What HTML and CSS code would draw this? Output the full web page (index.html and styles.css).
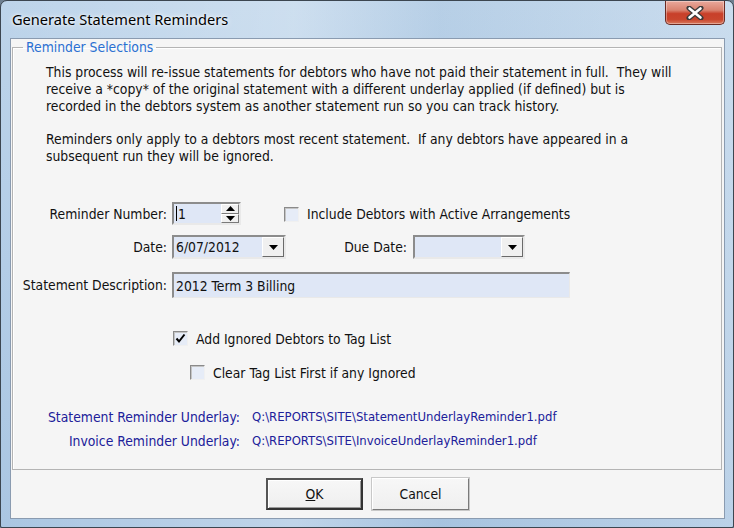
FILE: index.html
```html
<!DOCTYPE html>
<html>
<head>
<meta charset="utf-8">
<link rel="stylesheet" href="styles.css">
</head>
<body>
<div class="window">
  <div class="titlebar">
    <span class="title">Generate Statement Reminders</span>
    <div class="close">
      <svg width="20" height="14" viewBox="0 0 20 14">
        <path d="M4 2 L16 12 M16 2 L4 12" stroke="#3a3a3a" stroke-width="5" stroke-linecap="round"/>
        <path d="M4.5 2.5 L15.5 11.5 M15.5 2.5 L4.5 11.5" stroke="#ffffff" stroke-width="2.6" stroke-linecap="round"/>
      </svg>
    </div>
  </div>
  <div class="client">
    <fieldset class="group">
      <legend class="legend">Reminder Selections</legend>
      <p class="para">This process will re-issue statements for debtors who have not paid their statement in full.&nbsp; They will<br>receive a *copy* of the original statement with a different underlay applied (if defined) but is<br>recorded in the debtors system as another statement run so you can track history.</p>
      <p class="para para2">Reminders only apply to a debtors most recent statement.&nbsp; If any debtors have appeared in a<br>subsequent run they will be ignored.</p>

      <div class="row row1">
        <span class="label">Reminder Number:</span>
        <div class="field spin">
          <span class="val"><span class="caret"></span>1</span>
          <div class="spinbtns">
            <div class="sbtn"><svg width="9" height="5" viewBox="0 0 9 5"><path d="M0 5 L4.5 0 L9 5Z" fill="#000"/></svg></div>
            <div class="sbtn"><svg width="9" height="5" viewBox="0 0 9 5"><path d="M0 0 L4.5 5 L9 0Z" fill="#000"/></svg></div>
          </div>
        </div>
        <span class="check chk-arr"></span>
        <span class="ctext">Include Debtors with Active Arrangements</span>
      </div>

      <div class="row row2">
        <span class="label">Date:</span>
        <div class="field combo date">
          <span class="val">6/07/2012</span>
          <div class="dbtn"><svg width="9" height="5" viewBox="0 0 9 5"><path d="M0 0 L4.5 5 L9 0Z" fill="#000"/></svg></div>
        </div>
        <span class="label label-due">Due Date:</span>
        <div class="field combo due">
          <span class="val"></span>
          <div class="dbtn"><svg width="9" height="5" viewBox="0 0 9 5"><path d="M0 0 L4.5 5 L9 0Z" fill="#000"/></svg></div>
        </div>
      </div>

      <div class="row row3">
        <span class="label">Statement Description:</span>
        <div class="field text desc"><span class="val">2012 Term 3 Billing</span></div>
      </div>

      <div class="row row4">
        <span class="check checked">
          <svg width="11" height="11" viewBox="0 0 11 11"><path d="M1.5 5.5 L4 8.5 L9.5 1.5" stroke="#000" stroke-width="2" fill="none"/></svg>
        </span>
        <span class="ctext">Add Ignored Debtors to Tag List</span>
      </div>

      <div class="row row5">
        <span class="check"></span>
        <span class="ctext">Clear Tag List First if any Ignored</span>
      </div>

      <div class="row row6 blue">
        <span class="ulabel">Statement Reminder Underlay:</span>
        <span class="upath">Q:\REPORTS\SITE\StatementUnderlayReminder1.pdf</span>
      </div>
      <div class="row row7 blue">
        <span class="ulabel">Invoice Reminder Underlay:</span>
        <span class="upath">Q:\REPORTS\SITE\InvoiceUnderlayReminder1.pdf</span>
      </div>
    </fieldset>
    <div class="footer">
      <button class="btn default"><span class="u">O</span>K</button>
      <button class="btn">Cancel</button>
    </div>
  </div>
</div>
</body>
</html>
```
FILE: styles.css
```css
html, body {
  margin: 0;
  padding: 0;
}
body {
  width: 734px;
  height: 528px;
  overflow: hidden;
  background: #6e7f90;
}
.window {
  width: 734px;
  height: 528px;
  box-sizing: border-box;
  border: 1px solid #3c4650;
  border-radius: 7px 7px 2px 2px;
  background:
    linear-gradient(90deg, rgba(255,255,255,0.0) 0%, rgba(255,255,255,0.25) 40%, rgba(150,180,210,0.15) 60%, rgba(255,255,255,0.2) 100%),
    linear-gradient(180deg, #bdd4ea 0%, #b3cde6 50%, #aac6e2 100%);
  display: flex;
  flex-direction: column;
  font-family: "DejaVu Sans Condensed", "DejaVu Sans", sans-serif;
  font-stretch: condensed;
  font-size: 13.8px;
  color: #111;
}
.titlebar {
  height: 37px;
  display: flex;
  align-items: flex-start;
  justify-content: space-between;
  padding-left: 11px;
  padding-right: 8px;
}
.title {
  font-family: "Noto Sans", "DejaVu Sans", sans-serif;
  font-stretch: normal;
  font-size: 14.6px;
  line-height: 20px;
  margin-top: 8px;
  color: #000;
  text-shadow: 0 0 6px rgba(255,255,255,0.9), 0 0 3px rgba(255,255,255,0.9);
}
.close {
  width: 60px;
  height: 24px;
  box-sizing: border-box;
  border: 1px solid #6b2a22;
  border-top: none;
  border-radius: 0 0 5px 5px;
  background: linear-gradient(180deg, #e9a99c 0%, #d9826f 40%, #c8402a 55%, #c9452d 80%, #d97a5e 100%);
  display: flex;
  align-items: center;
  justify-content: center;
  box-shadow: inset 0 0 0 1px rgba(255,255,255,0.35);
}
.client {
  flex: 1;
  margin: 0 8px 8px 9px;
  background: #f5f5f5;
  border: 1px solid #8a9bb0;
  display: flex;
  flex-direction: column;
}
.group {
  margin: 0 2px 0 1px;
  padding: 0;
  border: 1px solid #b4b4b4;
  box-shadow: inset 1px 1px 0 #ffffff;
  flex: 1;
  min-width: 0;
}
.legend {
  margin-left: 10px;
  padding: 0 3px;
  color: #2a70d2;
  line-height: 17px;
}
.para {
  margin: 8px 0 0 33px;
  line-height: 17px;
  white-space: nowrap;
}
.para2 {
  margin-top: 16px;
}
.row {
  display: flex;
  align-items: center;
}
.label {
  width: 154px;
  text-align: right;
  flex: none;
  margin-right: 5px;
  white-space: nowrap;
}
.field {
  box-sizing: border-box;
  background: #dfe7f6;
  border: 2px solid;
  border-color: #8c8c8c #e9e9e9 #e9e9e9 #8c8c8c;
  display: flex;
  align-items: center;
}
.val {
  flex: 1;
  padding-left: 2px;
  display: flex;
  align-items: center;
  white-space: nowrap;
}
.caret {
  width: 1px;
  height: 15px;
  background: #000;
  margin-right: 1px;
}
.row1 {
  margin-top: 37px;
  height: 23px;
}
.spin {
  width: 69px;
  height: 23px;
}
.spinbtns {
  width: 18px;
  height: 19px;
  display: flex;
  flex-direction: column;
}
.sbtn {
  flex: 1;
  background: #f0f0f0;
  border: 1px solid;
  border-color: #ffffff #7a7a7a #7a7a7a #ffffff;
  display: flex;
  align-items: center;
  justify-content: center;
}
.check {
  width: 15px;
  height: 15px;
  box-sizing: border-box;
  background: #e6ecf7;
  border: 1px solid;
  border-color: #8a8a8a #f0f0f0 #f0f0f0 #8a8a8a;
  box-shadow: inset 1px 1px 0 #c4c4c4;
  flex: none;
  display: flex;
  align-items: center;
  justify-content: center;
}
.chk-arr {
  margin-left: 43px;
  margin-top: 2px;
}
.ctext {
  margin-left: 8px;
  white-space: nowrap;
}
.row2 {
  margin-top: 10px;
  height: 24px;
}
.combo {
  height: 24px;
}
.date {
  width: 114px;
}
.due {
  width: 112px;
}
.label-due {
  width: 121px;
  margin-right: 6px;
}
.dbtn {
  width: 22px;
  height: 20px;
  box-sizing: border-box;
  background: #f0f0f0;
  border: 1px solid;
  border-color: #ffffff #6a6a6a #6a6a6a #ffffff;
  display: flex;
  align-items: center;
  justify-content: center;
}
.row3 {
  margin-top: 13px;
  height: 26px;
}
.desc {
  width: 398px;
  height: 26px;
  border-width: 2px 1px 1px 2px;
}
.row4 {
  margin-top: 32px;
  padding-left: 160px;
  height: 17px;
}
.row5 {
  margin-top: 17px;
  padding-left: 177px;
  height: 17px;
}
.checked {
  background: #e6ecf7;
}
.blue {
  color: #20209a;
}
.row6 {
  margin-top: 27px;
  height: 17px;
}
.row7 {
  margin-top: 7px;
  height: 17px;
}
.ulabel {
  width: 227px;
  text-align: right;
  margin-right: 12px;
  white-space: nowrap;
  flex: none;
}
.upath {
  white-space: nowrap;
  font-size: 13px;
}
.footer {
  height: 48px;
  display: flex;
  justify-content: center;
  align-items: flex-start;
  gap: 9px;
  padding-top: 8px;
  box-sizing: border-box;
}
.btn {
  width: 97px;
  height: 32px;
  font-family: "DejaVu Sans Condensed", "DejaVu Sans", sans-serif;
  font-stretch: condensed;
  font-size: 13.8px;
  color: #111;
  background: linear-gradient(180deg, #f7f7f7 0%, #efefef 100%);
  border: 1px solid;
  border-color: #ffffff #7a7a7a #7a7a7a #ffffff;
  box-shadow: 0 0 0 1px #c8c8c8;
  padding: 0;
}
.btn.default {
  border: 2px solid;
  border-color: #555 #333 #333 #555;
  box-shadow: inset 1px 1px 0 #ffffff, inset -1px -1px 0 #9a9a9a;
}
.u {
  text-decoration: underline;
}
```
